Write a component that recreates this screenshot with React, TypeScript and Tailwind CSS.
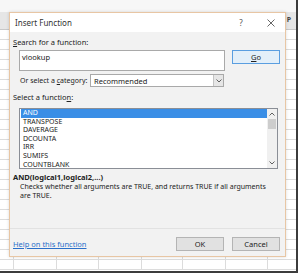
import React from 'react';

const colWidths = [14, 43, 42, 43, 41, 43, 42, 43];
const rows = Array.from({ length: 24 });
const functions = ['AND', 'TRANSPOSE', 'DAVERAGE', 'DCOUNTA', 'IRR', 'SUMIFS', 'COUNTBLANK'];

const Sheet = () => (
  <div className="flex flex-col">
    <div className="h-[12px] bg-[#f7f7f7]" />
    <div className="flex h-[18px] bg-[#e6e6e6] border-b border-[#c8c8c8]">
      {colWidths.map((w, i) => (
        <div
          key={i}
          style={{ width: w }}
          className="shrink-0 border-r border-[#d0d0d0] flex items-center justify-center text-[7px] font-bold text-[#444]"
        >
          {i === 7 ? 'P' : ''}
        </div>
      ))}
    </div>
    {rows.map((_, r) => (
      <div key={r} className="flex h-[10px] border-b border-[#dcdcdc]">
        {colWidths.map((w, i) => (
          <div key={i} style={{ width: w }} className="shrink-0 border-r border-[#dcdcdc]" />
        ))}
      </div>
    ))}
  </div>
);

const Chevron = ({ up }: { up?: boolean }) => (
  <svg width="6" height="4" viewBox="0 0 6 4">
    <path
      d={up ? 'M0.5 3.5 L3 1 L5.5 3.5' : 'M0.5 0.5 L3 3 L5.5 0.5'}
      fill="none"
      stroke="#606060"
      strokeWidth="1"
    />
  </svg>
);

const Dialog = () => (
  <div className="absolute left-[9px] top-[12px] w-[277px] border border-[#e8c6a4] bg-[#f2f2f2] shadow-[0_0_3px_rgba(0,0,0,0.15)] text-[7.5px] leading-[10px] text-[#222]">
    <div className="h-[19px] bg-white flex items-center pl-[5px] text-[8px] text-[#333]">
      <span className="flex-1">Insert Function</span>
      <span className="w-[10px] text-center text-[8px] text-[#555] mr-[21px]">?</span>
      <svg width="8" height="8" viewBox="0 0 8 8" className="mr-[10px]">
        <path d="M0.5 0.5 L7.5 7.5 M7.5 0.5 L0.5 7.5" stroke="#555" strokeWidth="0.9" />
      </svg>
    </div>

    <div className="flex flex-col pb-[5px]">
      <div className="mt-[5px] pl-[3px]">
        <span className="underline">S</span>earch for a function:
      </div>
      <div className="mt-[3px] flex items-start">
        <div className="ml-[9px] w-[206px] h-[21px] bg-white border border-[#a9a9a9] px-[2px] pt-[1px]">vlookup</div>
        <button className="ml-[7px] w-[48px] h-[14px] bg-[#e3eff9] border border-[#5a9ee0] flex items-center justify-center">
          <span className="underline">G</span>o
        </button>
      </div>

      <div className="mt-[3px] flex items-center h-[13px]">
        <span className="ml-[10px] w-[70px] whitespace-nowrap text-[7px]">
          Or select a <span className="underline">c</span>ategory:
        </span>
        <div className="w-[134px] h-[13px] bg-white border border-[#a9a9a9] flex items-center">
          <span className="flex-1 pl-[3px]">Recommended</span>
          <div className="w-[10px] h-full bg-[#e6e6e6] border-l border-[#c4c4c4] flex items-center justify-center">
            <Chevron />
          </div>
        </div>
      </div>

      <div className="mt-[5px] pl-[3px]">
        Select a functio<span className="underline">n</span>:
      </div>
      <div className="mt-[6px] ml-[9px] w-[259px] h-[61px] bg-white border border-[#8a8e96] flex">
        <div className="flex-1 flex flex-col pl-[1px] text-[7px] leading-[8.6px]">
          {functions.map((f, i) => (
            <div
              key={f}
              className={i === 0 ? 'bg-[#3a8ee6] text-white pl-[2px] h-[8.6px]' : 'pl-[2px] h-[8.6px]'}
            >
              {f}
            </div>
          ))}
        </div>
        <div className="w-[10px] bg-[#f0f0f0] flex flex-col items-center">
          <div className="h-[10px] flex items-center justify-center">
            <Chevron up />
          </div>
          <div className="w-[8px] h-[10px] bg-[#cdcdcd]" />
          <div className="flex-1" />
          <div className="h-[10px] flex items-center justify-center">
            <Chevron />
          </div>
        </div>
      </div>

      <div className="mt-[3px] pl-[3px] font-bold">AND(logical1,logical2,...)</div>
      <div className="pl-[10px] pr-[10px] text-[7px] leading-[9px]">
        Checks whether all arguments are TRUE, and returns TRUE if all arguments are TRUE.
      </div>

      <div className="mt-[28px] h-px bg-[#e2e2e2]" />

      <div className="mt-[8px] flex items-center h-[14px]">
        <a className="pl-[3px] flex-1 text-[#2a6fc9] underline">Help on this function</a>
        <button className="w-[48px] h-[14px] bg-[#e1e1e1] border border-[#b4b4b4]">OK</button>
        <button className="ml-[8px] mr-[5px] w-[48px] h-[14px] bg-[#e1e1e1] border border-[#b4b4b4]">Cancel</button>
      </div>
    </div>
  </div>
);

export default function App() {
  return (
    <div className="w-[300px] h-[275px] bg-white font-['Noto_Sans',sans-serif] overflow-hidden">
      <div className="relative w-[298px] h-[273px] border-r-2 border-b-2 border-[#3c3c3c] overflow-hidden bg-white">
        <Sheet />
        <Dialog />
      </div>
    </div>
  );
}
